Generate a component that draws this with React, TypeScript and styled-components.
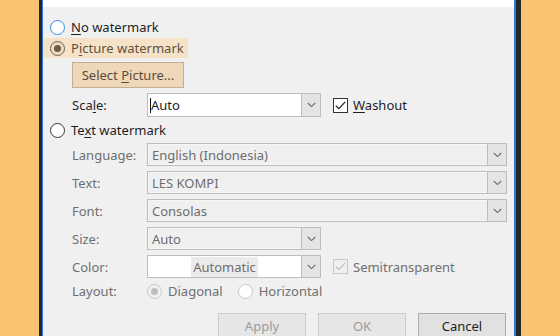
import React from 'react';
import styled, { createGlobalStyle } from 'styled-components';

const GlobalStyle = createGlobalStyle`
    html, body {
        margin:0;
        padding:0;
    }
    body {
        width:560px;
        height:336px;
        overflow:hidden;
        background:#f8c471;
        font-family:"Noto Sans", "Open Sans", sans-serif;
        font-size:13px;
    }
`

const Page = styled.div`
    display:flex;
    width:560px;
    height:336px;
    background:#f8c471;
`

const Dialog = styled.div`
    margin-left:39px;
    width:474px;
    height:336px;
    border-left:3px solid #262626;
    border-right:5px solid #262626;
    overflow:hidden;
`

const Frame = styled.div`
    height:100%;
    border-left:1px solid #2b7bd4;
    border-right:2px solid #2b7bd4;
    background:#f0f0f0;
    display:flex;
    flex-direction:column;
`

const TopStrip = styled.div`
    height:7px;
    background:#ffffff;
    flex-shrink:0;
`

const Body = styled.div`
    display:flex;
    flex-direction:column;
    padding:10px 0 0 7px;
`

const RadioRow = styled.label<{ $highlight?: boolean; $gap?: number }>`
    box-sizing:border-box;
    display:flex;
    align-items:center;
    align-self:flex-start;
    white-space:nowrap;
    height:20px;
    margin-top:${({ $gap }) => $gap ?? 0}px;
    margin-left:-7px;
    padding:0 7px;
    width:${({ $highlight }) => ($highlight ? '145px' : 'auto')};
    background:${({ $highlight }) => ($highlight ? '#f6e2c6' : 'transparent')};
    color:${({ $highlight }) => ($highlight ? '#5f5143' : '#1e1e1e')};
    u {
        text-decoration:underline;
        text-underline-offset:2px;
    }
`

type RadioKind = 'focus' | 'normal' | 'picked' | 'disabledOn' | 'disabledOff';

const radioColors: Record<RadioKind, { border: string; bg: string; dot: string }> = {
    focus: { border: '#3a8ee6', bg: '#ffffff', dot: 'transparent' },
    normal: { border: '#333333', bg: '#ffffff', dot: 'transparent' },
    picked: { border: '#6e6155', bg: '#eddcc4', dot: '#6b5c4d' },
    disabledOn: { border: '#c6c6c6', bg: '#f0f0f0', dot: '#bdbdbd' },
    disabledOff: { border: '#c6c6c6', bg: '#ffffff', dot: 'transparent' },
};

const RadioDot = styled.span<{ $kind: RadioKind }>`
    position:relative;
    box-sizing:border-box;
    width:15px;
    height:15px;
    border-radius:50%;
    border:1.5px solid ${({ $kind }) => radioColors[$kind].border};
    background:${({ $kind }) => radioColors[$kind].bg};
    margin-right:6px;
    flex-shrink:0;
    &::after {
        content:'';
        position:absolute;
        left:50%;
        top:50%;
        width:7px;
        height:7px;
        margin:-3.5px 0 0 -3.5px;
        border-radius:50%;
        background:${({ $kind }) => radioColors[$kind].dot};
    }
`

const PictureButton = styled.div`
    box-sizing:border-box;
    align-self:flex-start;
    margin:4px 0 0 22px;
    width:112px;
    height:26px;
    border:1px solid #c4ae96;
    background:#efd7b9;
    color:#5a4b3d;
    display:flex;
    align-items:center;
    justify-content:center;
    white-space:nowrap;
    u {
        text-decoration:underline;
        text-underline-offset:2px;
    }
`

const FieldRow = styled.div<{ $gap: number; $height?: number }>`
    display:flex;
    align-items:center;
    margin-top:${({ $gap }) => $gap}px;
    padding-left:22px;
    height:${({ $height }) => $height ?? 23}px;
    white-space:nowrap;
`

const Label = styled.span<{ $muted?: boolean }>`
    width:75px;
    flex-shrink:0;
    color:${({ $muted }) => ($muted ? '#6f6f6f' : '#262626')};
    u {
        text-decoration:underline;
        text-underline-offset:2px;
    }
`

const Combo = styled.div<{ $width: number; $white?: boolean; $height?: number }>`
    box-sizing:border-box;
    width:${({ $width }) => $width}px;
    height:${({ $height }) => $height ?? 23}px;
    display:flex;
    border:1px solid #bdbdbd;
    background:${({ $white }) => ($white ? '#ffffff' : '#f0f0f0')};
    box-shadow:inset 0 0 0 1px ${({ $white }) => ($white ? '#ffffff' : '#f7f7f7')};
`

const ComboText = styled.span<{ $muted?: boolean; $center?: boolean }>`
    flex:1;
    display:flex;
    align-items:center;
    justify-content:${({ $center }) => ($center ? 'center' : 'flex-start')};
    padding-left:${({ $center }) => ($center ? '0' : '4px')};
    color:${({ $muted }) => ($muted ? '#6d6d6d' : '#1e1e1e')};
`

const Caret = styled.span`
    display:inline-block;
    width:1px;
    height:15px;
    background:#111;
    margin-left:-2px;
`

const Selected = styled.span`
    background:#ebebeb;
    padding:1px 2px;
`

const DropButton = styled.span`
    box-sizing:border-box;
    width:20px;
    margin:-1px -1px -1px 0;
    border:1px solid #bdbdbd;
    background:#e4e4e4;
    display:flex;
    align-items:center;
    justify-content:center;
`

const Check = styled.label<{ $disabled?: boolean }>`
    display:flex;
    align-items:center;
    margin-left:12px;
    color:${({ $disabled }) => ($disabled ? '#6f6f6f' : '#1e1e1e')};
    u {
        text-decoration:underline;
        text-underline-offset:2px;
    }
`

const CheckBox = styled.span<{ $disabled?: boolean }>`
    box-sizing:border-box;
    width:15px;
    height:15px;
    border:1px solid ${({ $disabled }) => ($disabled ? '#c8c8c8' : '#333333')};
    background:${({ $disabled }) => ($disabled ? '#f0f0f0' : '#ffffff')};
    margin-right:5px;
    display:flex;
    align-items:center;
    justify-content:center;
`

const LayoutOptions = styled.div`
    display:flex;
    align-items:center;
    color:#6f6f6f;
`

const LayoutOption = styled.span`
    display:flex;
    align-items:center;
    margin-right:15px;
`

const ButtonBar = styled.div`
    display:flex;
    justify-content:flex-end;
    gap:12px;
    margin-top:12px;
    padding-right:8px;
`

const DialogButton = styled.div<{ $disabled?: boolean }>`
    box-sizing:border-box;
    width:88px;
    height:26px;
    border:1px solid ${({ $disabled }) => ($disabled ? '#cccccc' : '#adadad')};
    background:${({ $disabled }) => ($disabled ? '#e6e6e6' : '#e1e1e1')};
    color:${({ $disabled }) => ($disabled ? '#9b9b9b' : '#1e1e1e')};
    display:flex;
    align-items:center;
    justify-content:center;
`

const Chevron = () => (
    <svg width="9" height="6" viewBox="0 0 9 6">
        <path d="M0.8 1 L4.5 4.6 L8.2 1" fill="none" stroke="#6a6a6a" strokeWidth="1.1" />
    </svg>
)

const Tick = ({ color }: { color: string }) => (
    <svg width="11" height="9" viewBox="0 0 11 9">
        <path d="M0.8 4.6 L3.9 7.6 L10.2 0.9" fill="none" stroke={color} strokeWidth="1.3" />
    </svg>
)

const fields = [
    { label: 'Language:', value: 'English (Indonesia)', width: 360 },
    { label: 'Text:', value: 'LES KOMPI', width: 360 },
    { label: 'Font:', value: 'Consolas', width: 360 },
    { label: 'Size:', value: 'Auto', width: 174 },
];

const App = () => {
    return (
        <Page>
            <GlobalStyle />
            <Dialog>
                <Frame>
                    <TopStrip />
                    <Body>
                        <RadioRow>
                            <RadioDot $kind="focus" />
                            <span><u>N</u>o watermark</span>
                        </RadioRow>
                        <RadioRow $highlight $gap={1}>
                            <RadioDot $kind="picked" />
                            <span>P<u>i</u>cture watermark</span>
                        </RadioRow>
                        <PictureButton>
                            <span>Select <u>P</u>icture...</span>
                        </PictureButton>
                        <FieldRow $gap={5} $height={24}>
                            <Label><span>Sca<u>l</u>e:</span></Label>
                            <Combo $width={174} $white $height={24}>
                                <ComboText>
                                    <Caret />
                                    Auto
                                </ComboText>
                                <DropButton><Chevron /></DropButton>
                            </Combo>
                            <Check>
                                <CheckBox><Tick color="#222" /></CheckBox>
                                <span><u>W</u>ashout</span>
                            </Check>
                        </FieldRow>
                        <RadioRow $gap={3}>
                            <RadioDot $kind="normal" />
                            <span>Te<u>x</u>t watermark</span>
                        </RadioRow>
                        {fields.map((f, i) => (
                            <FieldRow key={f.label} $gap={i === 0 ? 3 : 5}>
                                <Label $muted>{f.label}</Label>
                                <Combo $width={f.width}>
                                    <ComboText $muted>{f.value}</ComboText>
                                    <DropButton><Chevron /></DropButton>
                                </Combo>
                            </FieldRow>
                        ))}
                        <FieldRow $gap={5}>
                            <Label $muted>Color:</Label>
                            <Combo $width={174} $white>
                                <ComboText $muted $center><Selected>Automatic</Selected></ComboText>
                                <DropButton><Chevron /></DropButton>
                            </Combo>
                            <Check $disabled>
                                <CheckBox $disabled><Tick color="#bdbdbd" /></CheckBox>
                                <span>Semitransparent</span>
                            </Check>
                        </FieldRow>
                        <FieldRow $gap={3} $height={20}>
                            <Label $muted>Layout:</Label>
                            <LayoutOptions>
                                <LayoutOption>
                                    <RadioDot $kind="disabledOn" />
                                    Diagonal
                                </LayoutOption>
                                <LayoutOption>
                                    <RadioDot $kind="disabledOff" />
                                    Horizontal
                                </LayoutOption>
                            </LayoutOptions>
                        </FieldRow>
                        <ButtonBar>
                            <DialogButton $disabled>Apply</DialogButton>
                            <DialogButton $disabled>OK</DialogButton>
                            <DialogButton>Cancel</DialogButton>
                        </ButtonBar>
                    </Body>
                </Frame>
            </Dialog>
        </Page>
    )
}

export default App;
